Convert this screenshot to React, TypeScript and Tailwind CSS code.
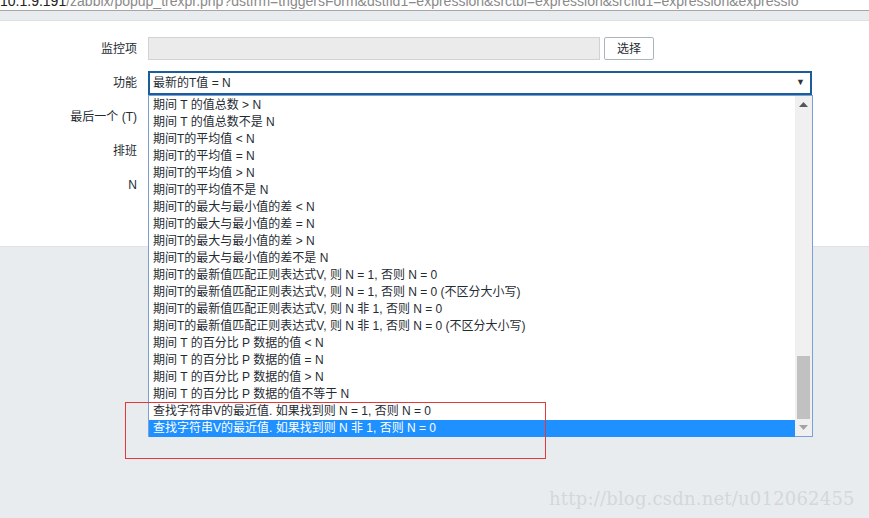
import React from "react"

const items = [
  "期间 T 的值总数 > N",
  "期间 T 的值总数不是 N",
  "期间T的平均值 < N",
  "期间T的平均值 = N",
  "期间T的平均值 > N",
  "期间T的平均值不是 N",
  "期间T的最大与最小值的差 < N",
  "期间T的最大与最小值的差 = N",
  "期间T的最大与最小值的差 > N",
  "期间T的最大与最小值的差不是 N",
  "期间T的最新值匹配正则表达式V, 则 N = 1, 否则 N = 0",
  "期间T的最新值匹配正则表达式V, 则 N = 1, 否则 N = 0 (不区分大小写)",
  "期间T的最新值匹配正则表达式V, 则 N 非 1, 否则 N = 0",
  "期间T的最新值匹配正则表达式V, 则 N 非 1, 否则 N = 0 (不区分大小写)",
  "期间 T 的百分比 P 数据的值 < N",
  "期间 T 的百分比 P 数据的值 = N",
  "期间 T 的百分比 P 数据的值 > N",
  "期间 T 的百分比 P 数据的值不等于 N",
  "查找字符串V的最近值. 如果找到则 N = 1, 否则 N = 0",
  "查找字符串V的最近值. 如果找到则 N 非 1, 否则 N = 0",
]

const font = "font-['Segoe_UI','Liberation_Sans','Noto_Sans_CJK_SC',sans-serif]"

function Row({ label, h, children }: { label: string; h: string; children?: React.ReactNode }) {
  return (
    <div className={`flex items-center ${h}`}>
      <div className="w-[137px] pr-0 text-right text-[12px] text-[#1f2c33]">{label}</div>
      <div className="ml-[11px] flex items-center">{children}</div>
    </div>
  )
}

export default function App() {
  return (
    <div className={`relative w-[869px] h-[518px] overflow-hidden bg-[#e9ecef] ${font}`}>
      {/* browser url strip, cut off */}
      <div className="h-[10px] overflow-hidden bg-white">
        <div className="-mt-[8px] whitespace-nowrap text-[14px] leading-[18px] text-[#8a8a8a]">
          <span className="text-[#222]">10.1.9.191</span>
          /zabbix/popup_trexpr.php?dstfrm=triggersForm&amp;dstfld1=expression&amp;srctbl=expression&amp;srcfld1=expression&amp;expressio
        </div>
      </div>
      <div className="h-[11px] border-t border-[#a6a6a6] border-b border-b-[#dde1e4] bg-[#e9ecef]" />

      {/* form */}
      <div className="h-[226px] bg-white pt-[16px] flex flex-col gap-[11px] border-b border-[#dfe3e6]">
        <Row label="监控项" h="h-[23px]">
          <div className="h-[23px] w-[452px] border border-[#cfd3d6] bg-[#ebebeb]" />
          <button className="ml-[4px] h-[23px] w-[50px] rounded-[2px] border border-[#a9b6bf] bg-white text-[12px] text-[#1f2c33]">
            选择
          </button>
        </Row>
        <Row label="功能" h="h-[23px]">
          <div className="flex h-[24px] w-[664px] items-center justify-between border-2 border-[#1d5d97] bg-white pl-[3px] pr-[5px] text-[12px] text-[#1f2c33]">
            <span>最新的T值 = N</span>
            <span className="text-[9px] text-[#333]">▼</span>
          </div>
        </Row>
        <Row label="最后一个 (T)" h="h-[23px]" />
        <Row label="排班" h="h-[24px]" />
        <Row label="N" h="h-[22px]" />
      </div>

      {/* open dropdown list */}
      <div className="absolute left-[148px] top-[95px] flex h-[342px] w-[665px] border border-[#7b9fdc] bg-white">
        <div className="flex-1 pt-[1px]">
          {items.map((t, i) => (
            <div
              key={i}
              className={`h-[17px] whitespace-nowrap pl-[4px] text-[12px] leading-[17px] ${
                i === items.length - 1 ? "bg-[#1e90ff] text-white" : "text-[#1f2c33]"
              }`}
            >
              {t}
            </div>
          ))}
        </div>
        <div className="flex w-[17px] flex-col items-center bg-[#f0f0f0]">
          <div className="flex h-[17px] items-center justify-center">
            <svg width="9" height="5" viewBox="0 0 9 5"><path d="M0 5 L4.5 0 L9 5 Z" fill="#555" /></svg>
          </div>
          <div className="flex-1" />
          <div className="h-[63px] w-[13px] bg-[#c1c1c1]" />
          <div className="flex h-[17px] items-center justify-center">
            <svg width="9" height="5" viewBox="0 0 9 5"><path d="M0 0 L9 0 L4.5 5 Z" fill="#a3a3a3" /></svg>
          </div>
        </div>
      </div>

      {/* red annotation box */}
      <div className="absolute left-[125px] top-[402px] h-[57px] w-[421px] border border-[#e8363b]" />

      {/* watermark */}
      <div className="absolute left-[549px] top-[485px] font-['DejaVu_Serif','Liberation_Serif',serif] text-[18px] tracking-[0.2px] text-[#d4d7da]">
        http://blog.csdn.net/u012062455
      </div>
    </div>
  )
}
